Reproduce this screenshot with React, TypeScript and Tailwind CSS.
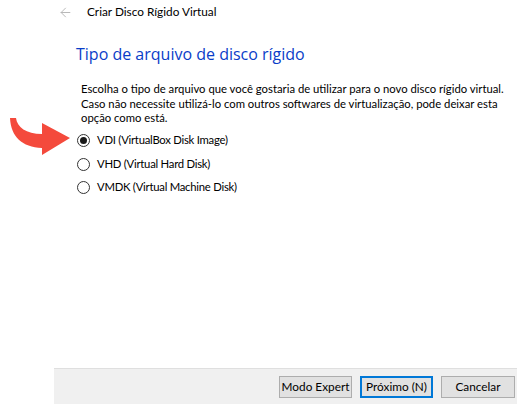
import { ArrowLeft } from 'lucide-react'

const options = [
  { id: 'vdi', label: 'VDI (VirtualBox Disk Image)' },
  { id: 'vhd', label: 'VHD (Virtual Hard Disk)' },
  { id: 'vmdk', label: 'VMDK (Virtual Machine Disk)' },
]

function Radio({ checked }: { checked: boolean }) {
  return (
    <span className="w-[13px] h-[13px] rounded-full border border-[#333] bg-white flex items-center justify-center shrink-0">
      {checked && <span className="w-[7px] h-[7px] rounded-full bg-[#1a1a1a]" />}
    </span>
  )
}

function RedArrow() {
  return (
    <svg width="62" height="42" viewBox="0 0 62 42" className="absolute left-[10px] top-[115px]">
      <path
        d="M0 3 L6 3 C7 12 16 19 32 19 L32 8 L60 23 L32 40 L32 33 C12 32 1 22 0 3 Z"
        fill="#f44a3c"
      />
    </svg>
  )
}

export default function App() {
  const selected = 'vdi'

  return (
    <div
      className="relative w-[517px] h-[404px] bg-white flex flex-col text-[11px] text-black"
      style={{ fontFamily: 'Lato, "Noto Sans", sans-serif' }}
    >
      {/* Title bar */}
      <div className="flex items-center h-[22px] pl-[58px] pt-[2px]">
        <ArrowLeft className="w-[15px] h-[15px] text-[#b4b4b4]" strokeWidth={1.5} />
        <span className="ml-[14px] text-[11.8px]">Criar Disco Rígido Virtual</span>
      </div>

      {/* Content */}
      <div className="flex flex-col pl-[76px] pt-[21px]">
        <h1 className="text-[16px] leading-[22px] text-[#0a3dc8]" style={{ fontFamily: '"Open Sans", sans-serif' }}>
          Tipo de arquivo de disco rígido
        </h1>

        <p className="pl-[5px] mt-[17px] leading-[14.5px] whitespace-nowrap text-[11.3px]">
          Escolha o tipo de arquivo que você gostaria de utilizar para o novo disco rígido virtual.
          <br />
          Caso não necessite utilizá-lo com outros softwares de virtualização, pode deixar esta
          <br />
          opção como está.
        </p>

        <div className="flex flex-col gap-[7.5px] mt-[7px] pl-[1px]">
          {options.map(o => (
            <label key={o.id} className="flex items-center gap-[7px] h-[16px] text-[11.3px] tracking-[-0.25px]">
              <Radio checked={o.id === selected} />
              <span>{o.label}</span>
            </label>
          ))}
        </div>
      </div>

      <RedArrow />

      {/* Footer */}
      <div className="mt-auto ml-[54px] h-[36px] bg-[#f0f0f0] border-t border-[#dfdfdf] flex items-center justify-end gap-[8px] pr-[2px] text-[11.8px]">
        <button className="w-[73px] h-[22px] bg-[#e1e1e1] border border-[#adadad] whitespace-nowrap">Modo Expert</button>
        <button className="w-[73px] h-[22px] bg-[#e1e1e1] border-2 border-[#0078d7] whitespace-nowrap">Próximo (N)</button>
        <button className="w-[74px] h-[22px] bg-[#e1e1e1] border border-[#adadad] whitespace-nowrap">Cancelar</button>
      </div>
    </div>
  )
}
